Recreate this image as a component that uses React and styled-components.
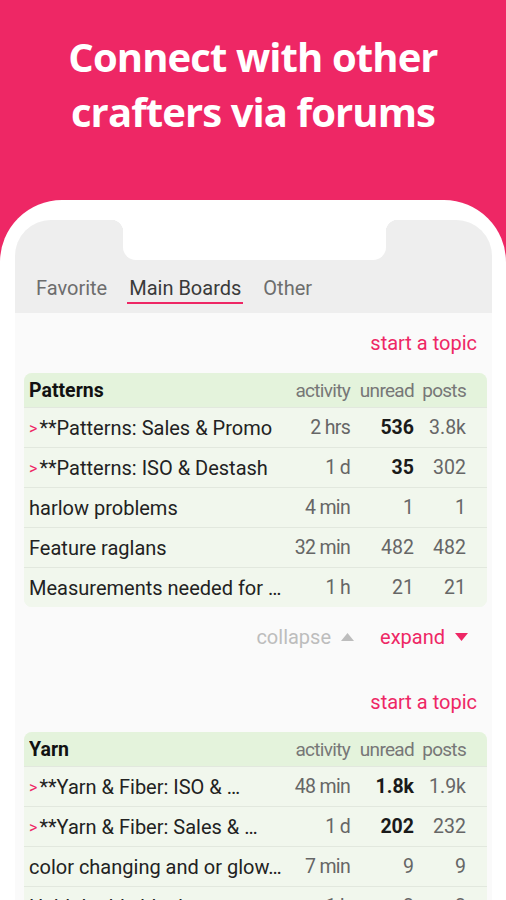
import React from "react";
import styled, { createGlobalStyle } from "styled-components";

const PINK = "#ee2765";

const Global = createGlobalStyle`
  html, body { margin: 0; padding: 0; }
  body { background: ${PINK}; font-family: Roboto, "Liberation Sans", sans-serif; }
  * { box-sizing: border-box; }
`;

const Page = styled.div`
  width: 506px;
  height: 900px;
  overflow: hidden;
  background: ${PINK};
  display: flex;
  flex-direction: column;
`;

const Headline = styled.h1`
  flex: none;
  margin: 0;
  height: 200px;
  padding-top: 29px;
  color: #fff;
  font-family: "Open Sans", "Liberation Sans", sans-serif;
  font-weight: 700;
  font-size: 40px;
  line-height: 55px;
  letter-spacing: -0.9px;
  text-align: center;
`;

const Frame = styled.div`
  flex: 1;
  min-height: 0;
  background: #fff;
  border-radius: 62px 62px 0 0;
  padding: 20px 14px 0 15px;
  display: flex;
  flex-direction: column;
`;

const Screen = styled.div`
  flex: 1;
  background: #fafafa;
  border-radius: 36px 36px 0 0;
  overflow: hidden;
  display: flex;
  flex-direction: column;
`;

const TopArea = styled.div`
  flex: none;
  background: #eeeeee;
  display: flex;
  flex-direction: column;
`;

const StatusBar = styled.div`
  height: 40px;
  display: flex;
  justify-content: center;
`;

const Notch = styled.div`
  width: 263px;
  height: 40px;
  background: #fff;
  border-radius: 0 0 13px 13px;
  margin-left: 1px;
  position: relative;
  &::before, &::after {
    content: "";
    position: absolute;
    top: 0;
    width: 12px;
    height: 12px;
  }
  &::before {
    left: -12px;
    background: radial-gradient(circle at 0 100%, transparent 12px, #fff 12.5px);
  }
  &::after {
    right: -12px;
    background: radial-gradient(circle at 100% 100%, transparent 12px, #fff 12.5px);
  }
`;

const Tabs = styled.div`
  display: flex;
  gap: 18px;
  padding: 0 0 0 19px;
  height: 53px;
`;

const Tab = styled.div`
  font-size: 20px;
  color: ${(p) => (p.$active ? "#3a3a3a" : "#6d6d6d")};
  padding: 18px 2px 0;
  height: 44px;
  border-bottom: 2px solid ${(p) => (p.$active ? PINK : "transparent")};
  line-height: 20px;
`;

const Content = styled.div`
  padding: 0 5px 0 9px;
  display: flex;
  flex-direction: column;
`;

const ActionRow = styled.div`
  flex: none;
  display: flex;
  justify-content: flex-end;
  align-items: center;
  gap: ${(p) => p.$gap || 0}px;
  height: ${(p) => p.$h}px;
  padding-top: ${(p) => p.$pt || 0}px;
  padding-right: ${(p) => p.$pr || 10}px;
  font-size: 20px;
`;

const Link = styled.span`
  color: ${(p) => (p.$muted ? "#bdbdbd" : PINK)};
  display: inline-flex;
  align-items: center;
  gap: 10px;
`;

const Card = styled.div`
  flex: none;
  border-radius: 8px;
  overflow: hidden;
  background: #f1f7ed;
  display: flex;
  flex-direction: column;
`;

const Row = styled.div`
  display: flex;
  align-items: center;
  height: ${(p) => (p.$head ? 34 : 40)}px;
  padding: 0 21px 0 5px;
  background: ${(p) => (p.$head ? "#e4f3dc" : "#f1f7ed")};
  border-top: ${(p) => (p.$head ? "none" : "1px solid #e2e8de")};
  font-size: 20px;
  color: #222;
`;

const Title = styled.div`
  flex: 1;
  min-width: 0;
  white-space: nowrap;
  overflow: hidden;
  font-weight: ${(p) => (p.$bold ? 700 : 400)};
  font-size: ${(p) => (p.$bold ? 19.5 : 20)}px;
  color: ${(p) => (p.$bold ? "#111" : "#222")};
`;

const Chevron = styled.span`
  color: ${PINK};
  font-size: 16px;
  margin-right: 2px;
  position: relative;
  top: -1px;
`;

const Cell = styled.div`
  width: ${(p) => p.$w}px;
  flex: none;
  text-align: right;
  white-space: nowrap;
  color: ${(p) => (p.$bold ? "#1a1a1a" : p.$head ? "#777" : "#666")};
  font-weight: ${(p) => (p.$bold ? 700 : 400)};
  font-size: ${(p) => (p.$head ? 19 : 19.5)}px;
  letter-spacing: ${(p) => (p.$tight ? "-0.7px" : "0")};
`;

const Tri = ({ up, color }) => (
  <svg width="13" height="8" viewBox="0 0 13 8">
    <path d={up ? "M0 8 L6.5 0 L13 8 Z" : "M0 0 L6.5 8 L13 0 Z"} fill={color} />
  </svg>
);

const boards = [
  {
    name: "Patterns",
    rows: [
      { t: "**Patterns: Sales & Promo", a: "2 hrs", u: "536", p: "3.8k", pin: true, bold: true },
      { t: "**Patterns: ISO & Destash", a: "1 d", u: "35", p: "302", pin: true, bold: true },
      { t: "harlow problems", a: "4 min", u: "1", p: "1" },
      { t: "Feature raglans", a: "32 min", u: "482", p: "482" },
      { t: "Measurements needed for …", a: "1 h", u: "21", p: "21" },
    ],
  },
  {
    name: "Yarn",
    rows: [
      { t: "**Yarn & Fiber: ISO & …", a: "48 min", u: "1.8k", p: "1.9k", pin: true, bold: true },
      { t: "**Yarn & Fiber: Sales & …", a: "1 d", u: "202", p: "232", pin: true, bold: true },
      { t: "color changing and or glow…", a: "7 min", u: "9", p: "9" },
      { t: "Held double blanket yarn", a: "1 h", u: "3", p: "3" },
    ],
  },
];

const Board = ({ board }) => (
  <Card>
    <Row $head>
      <Title $bold>{board.name}</Title>
      <Cell $w={64} $head $tight>activity</Cell>
      <Cell $w={64} $head $tight>unread</Cell>
      <Cell $w={52} $head $tight>posts</Cell>
    </Row>
    {board.rows.map((r, i) => (
      <Row key={i}>
        <Title>
          {r.pin && <Chevron>&gt;</Chevron>}
          {r.t}
        </Title>
        <Cell $w={64} $tight>{r.a}</Cell>
        <Cell $w={64} $bold={r.bold}>{r.u}</Cell>
        <Cell $w={52}>{r.p}</Cell>
      </Row>
    ))}
  </Card>
);

export default function App() {
  return (
    <Page>
      <Global />
      <Headline>
        Connect with other
        <br />
        crafters via forums
      </Headline>
      <Frame>
        <Screen>
          <TopArea>
            <StatusBar>
              <Notch />
            </StatusBar>
            <Tabs>
              <Tab>Favorite</Tab>
              <Tab $active>Main Boards</Tab>
              <Tab>Other</Tab>
            </Tabs>
          </TopArea>
          <Content>
            <ActionRow $h={60}>
              <Link>start a topic</Link>
            </ActionRow>
            <Board board={boards[0]} />
            <ActionRow $h={60} $gap={26} $pr={19}>
              <Link $muted>
                collapse <Tri up color="#bdbdbd" />
              </Link>
              <Link>
                expand <Tri color={PINK} />
              </Link>
            </ActionRow>
            <ActionRow $h={65} $pt={4}>
              <Link>start a topic</Link>
            </ActionRow>
            <Board board={boards[1]} />
          </Content>
        </Screen>
      </Frame>
    </Page>
  );
}
